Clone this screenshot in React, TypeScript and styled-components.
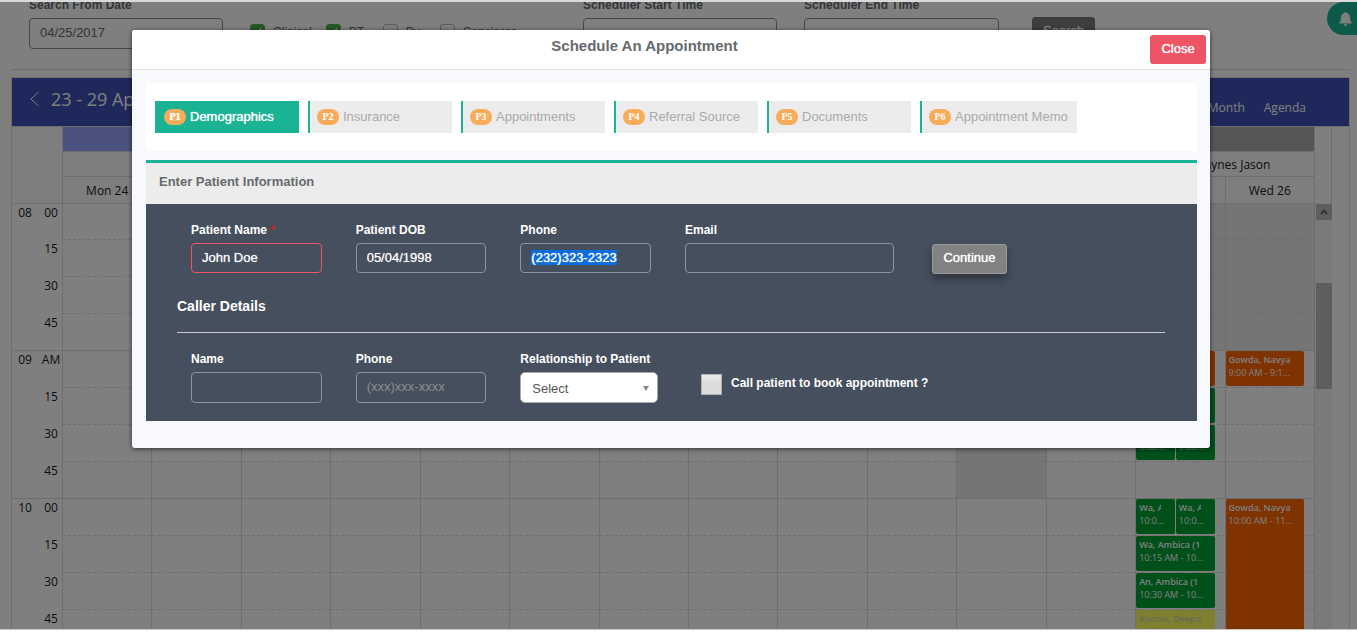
import React, { useEffect, useRef } from "react";
import styled, { createGlobalStyle, css } from "styled-components";

const sans = `"Liberation Sans", Arial, sans-serif`;
const ui = `"Open Sans", "Noto Sans", sans-serif`;
const green = "#1ab394";
const line = "#dcdcdc";

const GlobalStyle = createGlobalStyle`
  * { box-sizing: border-box; }
  body { margin: 0; background: #fff; font-family: ${sans}; font-size: 13px; color: #676a6c; }
  button, input, select { font-family: inherit; font-size: 13px; }
`;

const Frame = styled.div`
  position: relative;
  height: calc(100vh - 3px);
  overflow: hidden;
  border-top: 2px solid #d8dadb;
  border-bottom: 1px solid #c4c4c4;
`;

const Page = styled.div`
  margin-top: -5px;
`;

/* ---------- search filters ---------- */

const Filters = styled.form`
  display: grid;
  grid-template-columns: 194fr 306fr 194fr 195fr 331fr;
  column-gap: 27px;
  align-items: end;
  padding-left: 29px;
`;

const Field = styled.div<{ $end?: number }>`
  display: flex;
  flex-direction: column;
  gap: 5px;
  min-width: 0;
`;

const FilterLabel = styled.label`
  font-size: 12px;
  font-weight: bold;
  line-height: 16px;
`;

const filterBox = css`
  width: 100%;
  height: 31px;
  padding: 0 10px 2px;
  border: 1px solid #8a8d90;
  border-radius: 4px;
  background: transparent;
  color: #676a6c;
`;

const FilterInput = styled.input`
  ${filterBox}
`;

const FilterSelect = styled.select`
  ${filterBox}
  appearance: none;
`;

const Checks = styled.div`
  display: flex;
  gap: 14px;
  height: 28px;
`;

const Check = styled.label`
  display: flex;
  gap: 8px;
  font-size: 12px;
  line-height: 22px;

  span { min-width: 20px; }
`;

const CheckBox = styled.input`
  appearance: none;
  width: 15px;
  height: 15px;
  margin: 3px 0 0;
  border: 1px solid #b4b4b4;
  border-radius: 3px;

  &:checked {
    border-color: #4cae4c;
    background: #4cae4c
      linear-gradient(135deg, transparent 45%, #fff 45%, #fff 60%, transparent 60%) center / 7px 7px no-repeat;
  }
`;

const SearchButton = styled.button`
  justify-self: start;
  height: 32px;
  margin-left: 6px;
  padding: 0 10px 6px;
  border: 1px solid #777;
  border-radius: 3px;
  background: #7d7d7d;
  color: #fff;
  text-shadow: 0 0 1px #fff;
`;

const Rule = styled.hr`
  height: 1px;
  margin: 20px 7px 7px 11px;
  border: 0;
  background: ${line};
`;

const BellButton = styled.button`
  position: absolute;
  top: 0;
  right: 0;
  display: flex;
  align-items: center;
  width: 30px;
  height: 33px;
  padding: 0 0 0 11px;
  border: 0;
  border-radius: 17px 0 0 17px;
  background: ${green};
  overflow: hidden;
`;

/* ---------- scheduler ---------- */

const Scheduler = styled.section`
  margin: 0 7px 0 11px;
  border: 1px solid ${line};
  font-family: ${ui};
  font-size: 12px;
  color: #1a1a1a;
`;

const Toolbar = styled.header`
  display: flex;
  align-items: center;
  height: 48px;
  padding: 0 43px 6px 17px;
  background: #3f51b5;
  color: #fff;
`;

const IconButton = styled.button`
  display: flex;
  padding: 0;
  border: 0;
  background: none;
  color: inherit;
`;

const Range = styled.h2`
  flex: 1;
  margin: 0 0 0 11px;
  font-size: 18px;
  font-weight: 400;
`;

const Views = styled.nav`
  display: flex;
  gap: 19px;
  padding-top: 16px;
`;

const ViewLink = styled.a`
  color: inherit;
  text-decoration: none;
`;

const Board = styled.div`
  display: grid;
  grid-template-columns: 51px 1fr 17px 17px;
  grid-template-rows: 76px auto;
  border-top: 1px solid ${line};
  line-height: 18px;
`;

const Corner = styled.div`
  background: #fcfcfc;
  border-right: 1px solid ${line};
`;

const Head = styled.div`
  display: grid;
  grid-template-columns: repeat(14, 1fr);
  grid-template-rows: 25px 25px 26px;
  background: #fcfcfc;
`;

const HeadCell = styled.div<{ $span?: number; $fill?: string; $shift?: boolean }>`
  grid-column: span ${(p) => p.$span ?? 1};
  display: flex;
  align-items: center;
  justify-content: center;
  padding-top: 1px;
  padding-left: ${(p) => (p.$shift ? "16px" : "0")};
  border-right: 1px solid ${line};
  border-bottom: 1px solid ${line};
  background: ${(p) => p.$fill ?? "transparent"};
  white-space: nowrap;

  &:nth-last-child(-n + 14) { border-bottom: 0; }
`;

const Gutter = styled.div<{ $edge?: boolean }>`
  border-right: ${(p) => (p.$edge ? `1px solid ${line}` : "0")};
`;

const slotBorder = css<{ $index: number; $total?: number }>`
  border-bottom: 1px ${(p) => (p.$index % 4 === 3 ? "solid" : "dashed")} ${line};
  border-top: ${(p) => (p.$index === 0 ? `1px solid ${line}` : "0")};
`;

const Times = styled.div`
  display: grid;
  grid-auto-rows: 37px;
  border-right: 1px solid ${line};
`;

const Time = styled.div<{ $index: number }>`
  display: grid;
  grid-template-columns: 26px 26px;
  text-align: center;
  ${slotBorder}
  border-bottom-color: ${(p) => (p.$index % 4 === 3 ? line : "transparent")};
`;

const Days = styled.div`
  display: grid;
  grid-template-columns: repeat(14, 1fr);
`;

const Day = styled.div`
  display: grid;
  grid-template-columns: minmax(0, 1fr) minmax(0, 1fr) 9px;
  grid-template-rows: repeat(12, 37px);
  border-right: 1px solid ${line};
  min-width: 0;
`;

const Slot = styled.div<{ $index: number; $closed: boolean }>`
  grid-column: 1 / -1;
  grid-row: ${(p) => p.$index + 1};
  background: ${(p) => (p.$closed ? "#eaeaea" : "transparent")};
  ${slotBorder}
`;

const Event = styled.article<{ $row: number; $rows: number; $cols: string; $fill: string; $ink: string }>`
  grid-row: ${(p) => p.$row + 1} / span ${(p) => p.$rows};
  grid-column: ${(p) => p.$cols};
  z-index: 1;
  margin: 0 1px 2px 0;
  padding: 2px 14px 0 3px;
  border-radius: 2px;
  background: ${(p) => p.$fill};
  color: ${(p) => p.$ink};
  font-size: 9px;
  line-height: 13px;
  white-space: nowrap;
  overflow: hidden;
`;

const Who = styled.div`
  font-weight: 600;
  overflow: hidden;
`;

const When = styled.div``;

const ScrollTrack = styled.div`
  display: flex;
  flex-direction: column;
  gap: 63px;
  padding: 1px 0 0 1px;
  background: #f4f4f4;
`;

const ScrollUp = styled.div`
  display: grid;
  place-items: center;
  height: 16px;
  background: #bdbdbd;
`;

const ScrollThumb = styled.div`
  height: 106px;
  background: #bdbdbd;
`;

/* ---------- dialog ---------- */

const Backdrop = styled.div`
  position: absolute;
  inset: 0;
  z-index: 2;
  padding: 28px 147px 0 132px;
  background: rgba(0, 0, 0, 0.5);
`;

const Dialog = styled.div`
  border-radius: 3px;
  background: #f8f9fc;
  box-shadow: 0 1px 5px rgba(0, 0, 0, 0.6);
  padding-bottom: 27px;
`;

const DialogHead = styled.header`
  display: flex;
  align-items: flex-start;
  height: 40px;
  padding: 5px 4px 0 7px;
  border-bottom: 1px solid #dfe1e5;
  border-radius: 3px 3px 0 0;
  background: #fff;
`;

const DialogTitle = styled.h1`
  flex: 1;
  margin: 0;
  font-size: 15px;
  line-height: 22px;
  text-align: center;
`;

const CloseButton = styled.button`
  width: 56px;
  height: 29px;
  padding: 0 0 2px;
  border: 0;
  border-radius: 3px;
  background: #ed5565;
  color: #fff;
  text-shadow: 0 0 1px #fff;
`;

const Steps = styled.nav`
  display: flex;
  gap: 9px;
  margin: 13px 13px 9px 14px;
  padding: 18px 9px;
  background: #fff;
`;

const Step = styled.button<{ $active?: boolean }>`
  display: flex;
  align-items: center;
  gap: 4px;
  min-width: 144px;
  height: 32px;
  padding: 0 9px 0 7px;
  border: 0;
  border-left: 2px solid ${green};
  background: ${(p) => (p.$active ? green : "#ececec")};
  color: ${(p) => (p.$active ? "#fff" : "#aaa")};
  text-shadow: ${(p) => (p.$active ? "0 0 1px #fff" : "none")};
  white-space: nowrap;
`;

const StepName = styled.span`
  padding-bottom: 2px;
`;

const Badge = styled.span`
  width: 22px;
  height: 16px;
  border-radius: 8px;
  background: #f8ac59;
  color: #fff;
  font: bold 10px/16px "Liberation Serif", serif;
  text-align: center;
`;

const Panel = styled.section`
  margin: 0 13px 0 14px;
  border-top: 3px solid ${green};
`;

const PanelTitle = styled.h2`
  height: 41px;
  margin: 0;
  padding-left: 13px;
  background: #ececec;
  font-size: 13px;
  line-height: 38px;
`;

const Form = styled.form`
  padding: 18px 32px 18px 31px;
  background: #464f5d;
  color: #fff;
`;

const Row = styled.div<{ $columns: string }>`
  display: grid;
  grid-template-columns: ${(p) => p.$columns};
`;

const Cell = styled(Field)`
  padding: 0 ${(p) => p.$end ?? 20}px 0 14px;
`;

const Label = styled.label`
  font-size: 12px;
  font-weight: bold;
  line-height: 16px;
  white-space: nowrap;
`;

const Star = styled.span`
  color: #d01818;
`;

const Input = styled.input<{ $error?: boolean; $tall?: boolean }>`
  width: 100%;
  height: ${(p) => (p.$tall ? 31 : 30)}px;
  padding: 0 10px 2px;
  border: 1px solid ${(p) => (p.$error ? "#ed5565" : "#8c959a")};
  border-radius: 4px;
  background: transparent;
  color: #fff;
  line-height: 14px;
  outline: none;
  text-shadow: 0 0 1px rgba(255, 255, 255, 0.7);

  &::placeholder { color: #8e8e8e; text-shadow: none; }
  &::selection { background: #0a6cdf; color: #fff; text-shadow: 0 0 1px #fff; }
`;

const SelectWrap = styled.div`
  position: relative;
`;

const Select = styled.select`
  appearance: none;
  width: 100%;
  height: 31px;
  padding: 2px 11px 0;
  border: 1px solid #aaa;
  border-radius: 5px;
  background: #fff;
  color: #555;
`;

const Caret = styled.svg`
  position: absolute;
  top: 14px;
  right: 9px;
`;

const ContinueButton = styled.button`
  align-self: flex-start;
  width: 75px;
  height: 30px;
  margin-top: 22px;
  padding: 0 0 3px;
  border: 1px solid #9b9b9b;
  border-radius: 3px;
  background: #828282;
  color: #fff;
  text-shadow: 0 0 1px #fff;
  box-shadow: 0 5px 8px rgba(0, 0, 0, 0.35);
`;

const Subtitle = styled.h3`
  margin: 23px 0 17px;
  font-size: 14px;
  line-height: 18px;
`;

const Divider = styled.hr`
  height: 1px;
  margin: 0 0 18px;
  border: 0;
  background: #cacaca;
`;

const CallBack = styled.div`
  display: flex;
  align-items: center;
  align-self: end;
  gap: 9px;
  height: 38px;
  padding: 0 0 2px 30px;
`;

const CallBox = styled.input`
  appearance: none;
  width: 21px;
  height: 21px;
  margin: 2px 0 0;
  border: 1px solid #b0b0b0;
  background: linear-gradient(#ececec, #dcdcdc 40%);
`;

const dates = ["Mon 24", "Tue 25", "Wed 26"];
const headings = Array.from({ length: 14 }, (_, i) => (i < 12 ? dates[i % 3] : dates[i - 11]));

const slots = [
  ["08", "00"], ["", "15"], ["", "30"], ["", "45"],
  ["09", "AM"], ["", "15"], ["", "30"], ["", "45"],
  ["10", "00"], ["", "15"], ["", "30"], ["", "45"],
];

type Booking = { row: number; rows?: number; cols?: string; fill: string; ink?: string; who: string; when: string };

const G = "#00a035";
const O = "#ff6600";
const bookings: Record<number, Booking[]> = {
  12: [
    { row: 4, fill: O, who: "Gowda, Navya", when: "9:00 AM - 9:1..." },
    { row: 5, fill: G, who: "Wa, Ambica (1", when: "9:15 AM - 9:3..." },
    { row: 6, cols: "1", fill: G, who: "Wa, Ambica", when: "9:30..." },
    { row: 6, cols: "2", fill: G, who: "Wa, Ambica", when: "9:30..." },
    { row: 8, cols: "1", fill: G, who: "Wa, Ambica", when: "10:0..." },
    { row: 8, cols: "2", fill: G, who: "Wa, Ambica", when: "10:0..." },
    { row: 9, fill: G, who: "Wa, Ambica (1", when: "10:15 AM - 10..." },
    { row: 10, fill: G, who: "An, Ambica (1", when: "10:30 AM - 10..." },
    { row: 11, fill: "#ffff60", ink: "#d4d4a8", who: "Kumar, Deepa", when: "10:45 AM - 11..." },
  ],
  13: [
    { row: 4, fill: O, who: "Gowda, Navya", when: "9:00 AM - 9:1..." },
    { row: 8, rows: 4, fill: O, who: "Gowda, Navya", when: "10:00 AM - 11..." },
  ],
};

const isClosed = (day: number, slot: number) => (day >= 12 && slot < 4) || (day === 10 && slot < 8);

const steps = ["Demographics", "Insurance", "Appointments", "Referral Source", "Documents", "Appointment Memo"];

export default function App() {
  const phone = useRef<HTMLInputElement>(null);

  useEffect(() => {
    phone.current?.focus({ preventScroll: true });
    phone.current?.select();
  }, []);

  return (
    <>
      <GlobalStyle />
      <Frame>
        <Page>
          <Filters>
            <Field>
              <FilterLabel htmlFor="from">Search From Date</FilterLabel>
              <FilterInput id="from" defaultValue="04/25/2017" />
            </Field>
            <Checks>
              <Check><CheckBox type="checkbox" defaultChecked /><span>Clinical</span></Check>
              <Check><CheckBox type="checkbox" defaultChecked /><span>PT</span></Check>
              <Check><CheckBox type="checkbox" /><span>Py</span></Check>
              <Check><CheckBox type="checkbox" /><span>Concierge</span></Check>
            </Checks>
            <Field>
              <FilterLabel htmlFor="start">Scheduler Start Time</FilterLabel>
              <FilterSelect id="start" />
            </Field>
            <Field>
              <FilterLabel htmlFor="end">Scheduler End Time</FilterLabel>
              <FilterSelect id="end" />
            </Field>
            <SearchButton type="button">Search</SearchButton>
          </Filters>
          <Rule />
          <Scheduler>
            <Toolbar>
              <IconButton type="button" aria-label="Previous week">
                <svg width="11" height="16" viewBox="0 0 11 16" fill="none" stroke="currentColor">
                  <path d="M9.5 1 2 8l7.500 7" />
                </svg>
              </IconButton>
              <Range>23 - 29 Apr 2017</Range>
              <Views>
                <ViewLink href="#month">Month</ViewLink>
                <ViewLink href="#agenda">Agenda</ViewLink>
              </Views>
            </Toolbar>
            <Board>
              <Corner />
              <Head>
                <HeadCell $span={12} $fill="#96a4ff" />
                <HeadCell $span={2} $fill="#acacac" />
                <HeadCell $span={12} />
                <HeadCell $span={2} $shift>Haynes Jason</HeadCell>
                {headings.map((d, i) => <HeadCell key={i}>{d}</HeadCell>)}
              </Head>
              <Gutter $edge />
              <Gutter />
              <Times>
                {slots.map(([h, m], i) => (
                  <Time key={i} $index={i}><span>{h}</span><span>{m}</span></Time>
                ))}
              </Times>
              <Days>
                {headings.map((_, day) => (
                  <Day key={day}>
                    {slots.map((_s, i) => <Slot key={i} $index={i} $closed={isClosed(day, i)} />)}
                    {(bookings[day] ?? []).map((b, i) => (
                      <Event key={i} $row={b.row} $rows={b.rows ?? 1} $cols={b.cols ?? "1 / 3"} $fill={b.fill} $ink={b.ink ?? "#fff"}>
                        <Who>{b.who}</Who>
                        <When>{b.when}</When>
                      </Event>
                    ))}
                  </Day>
                ))}
              </Days>
              <ScrollTrack>
                <ScrollUp>
                  <svg width="8" height="6" viewBox="0 0 8 6" fill="none" stroke="#555" strokeWidth="1.500"><path d="M1 5l3-3.500L7 5" /></svg>
                </ScrollUp>
                <ScrollThumb />
              </ScrollTrack>
              <Gutter />
            </Board>
          </Scheduler>
        </Page>
        <BellButton type="button" aria-label="Notifications">
          <svg width="15" height="16" viewBox="0 0 15 16" fill="#fff">
            <path d="M7.500 1c.7 0 1.200.5 1.200 1.100 2.100.5 3.300 2.200 3.300 4.400 0 3 .8 4.500 2.300 6H.7C2.200 11 3 9.500 3 6.500c0-2.200 1.200-3.900 3.300-4.400C6.300 1.500 6.800 1 7.500 1zM5.700 13.200h3.600a1.800 1.800 0 0 1-3.600 0z" />
          </svg>
        </BellButton>

        <Backdrop>
          <Dialog role="dialog" aria-labelledby="dialog-title">
            <DialogHead>
              <DialogTitle id="dialog-title">Schedule An Appointment</DialogTitle>
              <CloseButton type="button">Close</CloseButton>
            </DialogHead>
            <Steps>
              {steps.map((name, i) => (
                <Step key={name} type="button" $active={i === 0}>
                  <Badge>P{i + 1}</Badge>
                  <StepName>{name}</StepName>
                </Step>
              ))}
            </Steps>
            <Panel>
              <PanelTitle>Enter Patient Information</PanelTitle>
              <Form>
                <Row $columns="2fr 2fr 2fr 3fr 3fr">
                  <Cell>
                    <Label htmlFor="patient">Patient Name <Star>*</Star></Label>
                    <Input id="patient" defaultValue="John Doe" $error />
                  </Cell>
                  <Cell>
                    <Label htmlFor="dob">Patient DOB</Label>
                    <Input id="dob" defaultValue="05/04/1998" />
                  </Cell>
                  <Cell>
                    <Label htmlFor="phone">Phone</Label>
                    <Input id="phone" ref={phone} defaultValue="(232)323-2323" />
                  </Cell>
                  <Cell $end={24}>
                    <Label htmlFor="email">Email</Label>
                    <Input id="email" />
                  </Cell>
                  <Cell>
                    <ContinueButton type="button">Continue</ContinueButton>
                  </Cell>
                </Row>
                <Subtitle>Caller Details</Subtitle>
                <Divider />
                <Row $columns="2fr 2fr 2fr 6fr">
                  <Cell>
                    <Label htmlFor="caller">Name</Label>
                    <Input id="caller" $tall />
                  </Cell>
                  <Cell>
                    <Label htmlFor="caller-phone">Phone</Label>
                    <Input id="caller-phone" placeholder="(xxx)xxx-xxxx" $tall />
                  </Cell>
                  <Cell $end={13}>
                    <Label htmlFor="relation">Relationship to Patient</Label>
                    <SelectWrap>
                      <Select id="relation"><option>Select</option></Select>
                      <Caret width="6" height="5" viewBox="0 0 6 5" fill="#888"><path d="M0 0h6L3 5z" /></Caret>
                    </SelectWrap>
                  </Cell>
                  <CallBack>
                    <CallBox id="call" type="checkbox" />
                    <Label htmlFor="call">Call patient to book appointment ?</Label>
                  </CallBack>
                </Row>
              </Form>
            </Panel>
          </Dialog>
        </Backdrop>
      </Frame>
    </>
  );
}
